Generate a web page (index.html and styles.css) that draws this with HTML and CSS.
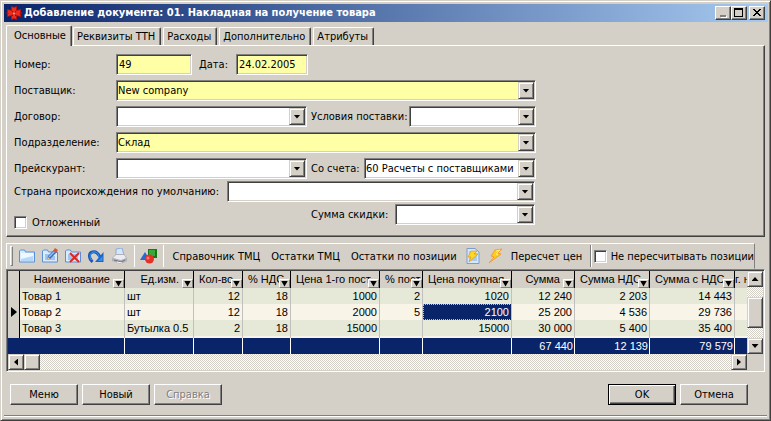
FILE: index.html
```html
<!DOCTYPE html>
<html lang="ru">
<head>
<meta charset="utf-8">
<title>Добавление документа</title>
<link rel="stylesheet" href="styles.css">
</head>
<body>
<main class="window">
  <header class="titlebar">
    <svg class="app-icon" width="16" height="16" viewBox="0 0 16 16"><path d="M5 1l3 1 3-1v4l4-1v3l1 1-1 1v3l-4-1v4l-3-1-3 1v-4l-4 1V9L0 8l1-1V4l4 1z" fill="#b81010"/><path d="M6 2l2 1 2-1v4l4-1v3l-1 .5 1 .5v2l-4-1v4l-2-1-2 1v-4l-4 1V9l1-.5L2 8V5l4 1z" fill="#ec2c1c"/><path d="M6 6l4 5M10 6l-4 5" stroke="#a00808"/><path d="M7 7.500h2v2H7z" fill="#ff9080"/></svg>
    <h1 class="title">Добавление документа: 01. Накладная на получение товара</h1>
    <div class="window-buttons">
      <button class="win-btn" aria-label="Свернуть"><svg width="12" height="10" viewBox="0 0 12 10"><path d="M4 8h6v2H4z" fill="#fff"/><path d="M3 7h6v2H3z" fill="#808080"/></svg></button>
      <button class="win-btn" aria-label="Развернуть"><svg width="12" height="10" viewBox="0 0 12 10"><path d="M1 0h9v9H1zM2 2v6h7V2z" fill="#000" fill-rule="evenodd"/></svg></button>
      <button class="win-btn win-close" aria-label="Закрыть"><svg width="12" height="10" viewBox="0 0 12 10" shape-rendering="crispEdges"><path d="M2 1h2v1h1v1h2V2h1V1h2v1H9v1H8v1H7v1h1v1h1v1h1v1H8V7H7V6H5v1H4v1H2V7h1V6h1V5h1V4H4V3H3V2H2z" fill="#000"/></svg></button>
    </div>
  </header>

  <nav class="tabs" role="tablist">
    <button class="tab tab-active" role="tab" aria-selected="true">Основные</button>
    <button class="tab" role="tab">Реквизиты ТТН</button>
    <button class="tab" role="tab">Расходы</button>
    <button class="tab" role="tab">Дополнительно</button>
    <button class="tab" role="tab">Атрибуты</button>
  </nav>

  <section class="page">
    <div class="row">
      <label class="caption" for="number">Номер:</label>
      <input class="field required number" id="number" type="text" value="49">
      <label class="date-caption" for="date">Дата:</label>
      <input class="field required date" id="date" type="text" value="24.02.2005">
    </div>
    <div class="row">
      <label class="caption" for="supplier">Поставщик:</label>
      <span class="combo required wide"><select id="supplier"><option>New company</option></select><i class="drop"></i></span>
    </div>
    <div class="row">
      <label class="caption" for="contract">Договор:</label>
      <span class="combo half"><select id="contract"><option></option></select><i class="drop"></i></span>
      <span class="pair">
        <label for="terms">Условия поставки:</label>
        <span class="combo terms"><select id="terms"><option></option></select><i class="drop"></i></span>
      </span>
    </div>
    <div class="row">
      <label class="caption" for="department">Подразделение:</label>
      <span class="combo required wide"><select id="department"><option>Склад</option></select><i class="drop"></i></span>
    </div>
    <div class="row row-tight">
      <label class="caption" for="pricelist">Прейскурант:</label>
      <span class="combo half"><select id="pricelist"><option></option></select><i class="drop"></i></span>
      <span class="pair">
        <label for="account">Со счета:</label>
        <span class="combo account"><select id="account"><option>60 Расчеты с поставщиками и подрядчиками</option></select><i class="drop"></i></span>
      </span>
    </div>
    <div class="row row-tight">
      <label class="country-caption" for="country">Страна происхождения по умолчанию:</label>
      <span class="combo country"><select id="country"><option></option></select><i class="drop"></i></span>
    </div>
    <div class="row row-last">
      <label class="check deferred"><input type="checkbox">Отложенный</label>
      <span class="pair pair-last">
        <label for="discount">Сумма скидки:</label>
        <span class="combo discount"><select id="discount"><option></option></select><i class="drop"></i></span>
      </span>
    </div>
  </section>

  <div class="toolbar">
    <i class="grip"></i>
    <button class="tool" aria-label="Открыть"><svg width="16" height="16" viewBox="0 0 16 16"><path d="M.5 14V3l1-1h4l1 2h9v10z" fill="#d8ecff" stroke="#5c8ed8"/><path d="M2 13V6h12v7z" fill="#b4d8fc"/><path d="M2 5h12v3L2 11z" fill="#eef8ff"/></svg></button>
    <button class="tool" aria-label="Изменить"><svg width="16" height="16" viewBox="0 0 16 16"><path d="M.5 14V3l1-1h4l1 2h9v10z" fill="#d8ecff" stroke="#5c8ed8"/><path d="M3 7h8M3 9h10M3 11h10" stroke="#6c9cd8"/><path d="M5 12l1-4 6-6 3 2-7 7z" fill="#3468b8"/><path d="M7 9l6-6" stroke="#90c0f4" stroke-width="1.5"/><path d="M11 3l2-3 3 2-2 3z" fill="#d85830"/><path d="M5 12l1-3 2 2z" fill="#f4c890"/></svg></button>
    <button class="tool" aria-label="Удалить"><svg width="16" height="16" viewBox="0 0 16 16"><path d="M.5 14V3l1-1h4l1 2h9v10z" fill="#d8ecff" stroke="#5c8ed8"/><path d="M3 7h10M3 9h10M3 11h10" stroke="#6c9cd8"/><path d="M5 5l9 9M14 5l-9 9" stroke="#e02820" stroke-width="2"/></svg></button>
    <button class="tool" aria-label="Обновить"><svg width="16" height="16" viewBox="0 0 16 16"><path d="M4.500 14C0 10 1 4.500 4.500 4 8 3 10 5 12 9" fill="none" stroke="#1858b8" stroke-width="3"/><path d="M3.500 12C1 9 2 5 5 4c3-.5 5.500 1 6 5" fill="none" stroke="#4898ec"/><path d="M15.500 4v10H7z" fill="#1c64c8"/><path d="M14.500 8v5H10z" fill="#3c8ce4"/></svg></button>
    <button class="tool" aria-label="Печать"><svg width="16" height="16" viewBox="0 0 16 16"><path d="M5 7V1l6-1 2 7z" fill="#d4e6fc" stroke="#90acd8"/><path d="M1 10l4-4h8l3 4v3l-6 3-9-3z" fill="#b0b0b8"/><path d="M2 10l3-3h8l2 3-5 2z" fill="#ececf0"/><path d="M3 12l7 2 4-2" fill="none" stroke="#707480"/><path d="M6 14l5 1" stroke="#f8f8fc"/></svg></button>
    <i class="separator"></i>
    <button class="tool tool-shapes" aria-label="Группы"><svg width="18" height="16" viewBox="0 0 18 16"><path d="M0 12l5-8 5 8z" fill="#2868d0"/><path d="M8 1h9v9H8z" fill="#187818"/><path d="M9 2h6v6H9z" fill="#38a838"/><circle cx="9.500" cy="11" r="4.500" fill="#e83028"/><circle cx="8" cy="10" r="1.500" fill="#ff8070"/></svg></button>
    <i class="separator"></i>
    <button class="tool-text">Справочник ТМЦ</button>
    <button class="tool-text">Остатки ТМЦ</button>
    <button class="tool-text">Остатки по позиции</button>
    <button class="tool" aria-label="Провести"><svg width="16" height="16" viewBox="0 0 16 16"><path d="M2 .5h8l4 3.500v11.500H2z" fill="#d4e8fc" stroke="#7c9ccc"/><path d="M4 4h6M4 6h8M4 8h8M4 10h8M4 12h8" stroke="#88acd8"/><path d="M6 3h6l-3 3h4L4 14l2-5H3z" fill="#ffd820" stroke="#d89018" stroke-width=".6"/></svg></button>
    <button class="tool" aria-label="Выполнить"><svg width="16" height="16" viewBox="0 0 16 16"><path d="M7 2l7-1-4 4 3 1L1 15l5-6-3-1z" fill="#ffcc18" stroke="#f09030" stroke-width=".8"/><path d="M8 3l4-1-4 4 2 1" fill="none" stroke="#fff080"/></svg></button>
    <button class="tool-text">Пересчет цен</button>
    <i class="separator"></i>
    <label class="check"><input type="checkbox">Не пересчитывать позиции</label>
  </div>

  <section class="grid">
    <div class="grid-body">
      <table>
        <colgroup><col class="c-mark"><col class="c-name"><col class="c-unit"><col class="c-qty"><col class="c-vat"><col class="c-first"><col class="c-pct"><col class="c-buy"><col class="c-sum"><col class="c-sumvat"><col class="c-total"><col></colgroup>
        <thead>
          <tr><th></th><th><div class="fits">Наименование<i class="filter"></i></div></th><th><div class="fits">Ед.изм.<i class="filter"></i></div></th><th><div>Кол-во<i class="filter"></i></div></th><th><div>% НДС<i class="filter"></i></div></th><th><div>Цена 1-го пост<i class="filter"></i></div></th><th><div>% пост<i class="filter"></i></div></th><th><div>Цена покупная<i class="filter"></i></div></th><th><div class="fits">Сумма<i class="filter"></i></div></th><th><div>Сумма НДС<i class="filter"></i></div></th><th><div>Сумма с НДС<i class="filter"></i></div></th><th class="cut"><div>г. н</div></th></tr>
        </thead>
        <tbody>
          <tr><th></th><td class="text">Товар 1</td><td class="text">шт</td><td>12</td><td>18</td><td>1000</td><td>2</td><td>1020</td><td>12 240</td><td>2 203</td><td>14 443</td><td></td></tr>
          <tr><th><i class="marker"></i></th><td class="text">Товар 2</td><td class="text">шт</td><td>12</td><td>18</td><td>2000</td><td>5</td><td class="selected">2100</td><td>25 200</td><td>4 536</td><td>29 736</td><td></td></tr>
          <tr><th></th><td class="text">Товар 3</td><td class="text">Бутылка 0.5</td><td>2</td><td>18</td><td>15000</td><td></td><td>15000</td><td>30 000</td><td>5 400</td><td>35 400</td><td></td></tr>
          <tr class="filler"><th></th><td></td><td></td><td></td><td></td><td></td><td></td><td></td><td></td><td></td><td></td><td></td></tr>
        </tbody>
        <tfoot>
          <tr><td class="plain"></td><td></td><td></td><td></td><td></td><td></td><td></td><td></td><td>67 440</td><td>12 139</td><td>79 579</td><td></td></tr>
        </tfoot>
      </table>
      <div class="vscroll">
        <button class="scroll-btn" aria-label="Вверх"><i class="arrow up"></i></button>
        <i class="vtrack-top"></i><i class="vthumb"></i><i class="fill"></i>
        <button class="scroll-btn" aria-label="Вниз"><i class="arrow down"></i></button>
      </div>
    </div>
    <div class="hscroll">
      <div class="htrack">
        <button class="scroll-btn" aria-label="Влево"><i class="arrow left"></i></button>
        <i class="hthumb"></i><i class="fill"></i>
        <button class="scroll-btn" aria-label="Вправо"><i class="arrow right"></i></button>
      </div>
    </div>
  </section>

  <footer class="actions">
    <button class="btn">Меню</button>
    <button class="btn">Новый</button>
    <button class="btn" disabled>Справка</button>
    <span class="fill"></span>
    <button class="btn btn-default">OK</button>
    <button class="btn">Отмена</button>
  </footer>
  <div class="statusline"></div>
</main>
</body>
</html>
```
FILE: styles.css
```css
:root {
  --face: #d4d0c8;
  --light: #ffffff;
  --shadow: #808080;
  --dark: #404040;
  --navy: #0a246a;
  --required: #ffffa5;
}

* { box-sizing: border-box; }

body {
  margin: 0;
  background: var(--face);
  color: #000;
  font: 11px/13px "DejaVu Sans Condensed", "DejaVu Sans", sans-serif;
}

button, input, select { font: inherit; color: inherit; margin: 0; }
button { padding: 0; background: var(--face); white-space: nowrap; }
svg { display: block; }

.window {
  min-height: 100vh;
  padding: 2px;
  display: flex;
  flex-direction: column;
  background: var(--face);
  border: 1px solid;
  border-color: var(--face) var(--dark) var(--dark) var(--face);
  box-shadow: inset 1px 1px var(--light), inset -1px -1px var(--shadow);
}

/* Title bar */
.titlebar {
  display: flex;
  align-items: center;
  height: 18px;
  margin: 1px 0 0 1px;
  padding: 0 3px 0 2px;
  background: linear-gradient(90deg, var(--navy), #a6caf0);
}
.title {
  flex: 1;
  margin: 0 0 0 2px;
  color: #fff;
  font-size: 11px;
  line-height: 16px;
  font-weight: bold;
  white-space: nowrap;
}
.window-buttons { display: flex; }
.win-btn {
  width: 16px;
  height: 14px;
  border: 1px solid;
  border-color: var(--light) var(--dark) var(--dark) var(--light);
  box-shadow: inset -1px -1px var(--shadow);
  padding: 1px;
}
.win-close { margin-left: 2px; }

/* Tabs */
.tabs {
  display: flex;
  align-items: flex-end;
  gap: 2px;
  height: 23px;
  padding-left: 3px;
}
.tab {
  height: 18px;
  padding: 0 5px 0 3px;
  border: 1px solid;
  border-color: var(--light) var(--dark) transparent var(--light);
  border-bottom: 0;
  border-radius: 2px 2px 0 0;
  box-shadow: inset -1px 0 var(--shadow);
}
.tab-active {
  position: relative;
  height: 21px;
  margin: 0 -1px -1px 0;
  padding: 0 5px 2px 7px;
}

/* Form page */
.page {
  margin: 0 3px;
  padding: 8px 7px 7px;
  border: 1px solid;
  border-color: var(--light) var(--dark) var(--dark) var(--light);
  box-shadow: inset -1px -1px var(--shadow);
}
.row {
  display: flex;
  align-items: center;
  height: 21px;
  margin-bottom: 5px;
  white-space: nowrap;
}
.row-tight { margin-bottom: 2px; }
.row-last { height: 25px; margin-bottom: 0; align-items: flex-start; }
.caption { width: 102px; }
.date-caption { width: 44px; padding-left: 7px; }
.country-caption { width: 213px; }
.number { width: 76px; }
.date { width: 72px; }
.wide { width: 420px; }
.half { width: 191px; }
.country { width: 308px; }
.terms { width: 127px; }
.account { width: 172px; }
.discount { width: 140px; }
.pair {
  display: flex;
  align-items: center;
  justify-content: space-between;
  width: 225px;
  margin-left: 4px;
}
.pair-last { width: 224px; }
.deferred { width: 293px; align-self: flex-end; }

.field, .combo {
  height: 21px;
  background: #fff;
  border: 1px solid;
  border-color: var(--shadow) var(--light) var(--light) var(--shadow);
  box-shadow: inset 1px 1px var(--dark), inset -1px -1px var(--face);
}
.field { padding: 0 2px 1px; border-radius: 0; outline: 0; }
.required { background: var(--required); }
.combo { position: relative; display: flex; padding: 1px; }
.combo select {
  appearance: none;
  flex: 1;
  min-width: 0;
  padding: 0 17px 1px 0;
  border: 0;
  border-radius: 0;
  background: transparent;
  outline: 0;
}
.drop, .scroll-btn, .hthumb, .vthumb {
  display: flex;
  align-items: center;
  justify-content: center;
  background: var(--face);
  border: 1px solid;
  border-color: var(--face) var(--dark) var(--dark) var(--face);
  box-shadow: inset 1px 1px var(--light), inset -1px -1px var(--shadow);
}
.drop {
  position: absolute;
  top: 1px;
  right: 1px;
  bottom: 1px;
  width: 16px;
  pointer-events: none;
}
.drop::before, .arrow, .filter::before {
  content: "";
  background: #000;
  width: 7px;
  height: 4px;
  clip-path: polygon(0 0, 100% 0, 50% 100%);
}
.up { clip-path: polygon(50% 0, 100% 100%, 0 100%); }
.left { width: 4px; height: 7px; clip-path: polygon(100% 0, 100% 100%, 0 50%); }
.right { width: 4px; height: 7px; clip-path: polygon(0 0, 100% 50%, 0 100%); }

.check { display: flex; align-items: center; gap: 5px; white-space: nowrap; }
.check input {
  appearance: none;
  width: 13px;
  height: 13px;
  background: #fff;
  border: 1px solid;
  border-color: var(--shadow) var(--light) var(--light) var(--shadow);
  box-shadow: inset 1px 1px var(--dark), inset -1px -1px var(--face);
}

/* Toolbar */
.toolbar {
  display: flex;
  align-items: center;
  height: 26px;
  margin: 6px 13px 0 3px;
  padding-left: 3px;
  border: 1px solid;
  border-color: var(--light) var(--shadow) var(--face) var(--light);
}
.grip {
  width: 3px;
  height: 20px;
  margin-right: 6px;
  border: 1px solid;
  border-color: var(--light) var(--shadow) var(--shadow) var(--light);
}
.tool { border: 0; margin-right: 7px; }
.tool-shapes { margin-right: 5px; }
.separator {
  width: 2px;
  height: 22px;
  margin-right: 5px;
  background: linear-gradient(90deg, var(--shadow) 50%, var(--light) 50%);
}
.tool-text { border: 0; margin: 0 8px 0 3px; }
.tool + .tool-text { margin-left: 0; }
.toolbar .check { margin-left: -3px; gap: 4px; }

/* Grid */
.grid {
  margin: 0 3px;
  border: 1px solid;
  border-color: var(--shadow) var(--light) var(--light) var(--shadow);
  box-shadow: inset 1px 1px var(--dark), inset -1px -1px var(--face);
  padding: 1px;
  font-family: "Liberation Sans", Arial, sans-serif;
}
.grid-body { display: flex; }
table {
  flex: 1;
  width: 0;
  table-layout: fixed;
  border-collapse: separate;
  border-spacing: 0;
}
.c-mark { width: 12px; }
.c-name { width: 105px; }
.c-unit { width: 69px; }
.c-qty { width: 49px; }
.c-vat { width: 48px; }
.c-first, .c-buy { width: 89px; }
.c-pct { width: 43px; }
.c-sum { width: 63px; }
.c-sumvat { width: 75px; }
.c-total { width: 85px; }
th, td {
  height: 16px;
  padding: 0 2px;
  border-right: 1px solid #c0c0c0;
  font-weight: normal;
  text-align: right;
  white-space: nowrap;
  overflow: hidden;
}
td.text { text-align: left; }
th { background: var(--face); border-color: #000; }
thead th { height: 17px; padding: 0; }
thead div {
  position: relative;
  height: 17px;
  padding: 2px 0 0 5px;
  display: flex;
}
thead .fits { padding-right: 14px; justify-content: flex-end; }
thead .cut div { padding: 2px 0 0; }
tr > :last-child { border-right: 0; }
tbody tr { background: #e6e8d8; }
tbody tr:nth-child(even) { background: #f8f4e8; }
tbody .filler > * { height: 2px; }
tbody th { padding: 0 0 0 3px; }
.marker { display: block; width: 6px; height: 10px; background: #000; clip-path: polygon(0 0, 100% 50%, 0 100%); }
td.selected { background: var(--navy); color: #fff; outline: 1px dotted #e0c060; outline-offset: -1px; }
tfoot td { background: var(--navy); color: #fff; border-color: #fff; padding-right: 1px; }
tfoot .plain { border-color: var(--navy); }
.filter {
  position: absolute;
  right: 0;
  bottom: 0;
  width: 11px;
  height: 9px;
  display: flex;
  align-items: center;
  justify-content: center;
  background: var(--face);
  border: 1px solid;
  border-color: var(--light) var(--shadow) var(--shadow) var(--light);
}
.filter::before { height: 6px; }

.vscroll { display: flex; flex-direction: column; width: 16px; }
.scroll-btn { width: 16px; height: 16px; }
.fill { flex: 1; }
.vscroll, .htrack { background: repeating-conic-gradient(#fff 0 25%, var(--face) 0 50%) 0 0 / 2px 2px; }
.vtrack-top { height: 10px; }
.vthumb { height: 31px; }
.hscroll { padding-right: 16px; }
.htrack { display: flex; height: 16px; }
.hthumb { width: 16px; }

/* Bottom buttons */
.actions {
  display: flex;
  gap: 4px;
  margin: 12px 20px 0 7px;
}
.btn {
  width: 68px;
  height: 21px;
  border: 1px solid;
  border-color: var(--light) var(--dark) var(--dark) var(--light);
  box-shadow: inset -1px -1px var(--shadow);
}
.btn-default {
  border-color: #000;
  box-shadow: inset 1px 1px var(--light), inset -1px -1px var(--dark), inset -2px -2px var(--shadow);
}
.btn:disabled { color: var(--shadow); text-shadow: 1px 1px #fff; }
.statusline {
  height: 2px;
  margin: 10px 1px 0;
  border-top: 1px solid var(--shadow);
  border-bottom: 1px solid var(--light);
}
```
